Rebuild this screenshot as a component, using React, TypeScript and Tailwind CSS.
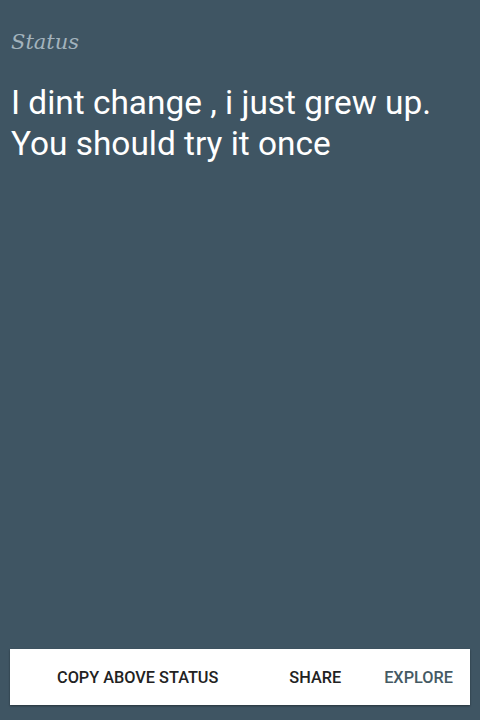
export default function App() {
  return (
    <div className="w-[480px] h-[720px] bg-[#3f5563] flex flex-col overflow-hidden">
      <div className="pl-[11px] pt-[28px] text-[21px] italic text-[#a3b3bd] leading-[28px]" style={{ fontFamily: '"DejaVu Serif", serif' }}>
        Status
      </div>
      <div className="pl-[11px] pt-[26px] text-[33.4px] leading-[41px] text-white" style={{ fontFamily: 'Roboto, sans-serif' }}>
        I dint change , i just grew up.
        <br />
        You should try it once
      </div>
      <div className="flex-1" />
      <div className="mx-[10px] mb-[15px] h-[56px] bg-white flex items-center pt-[3px] shadow-[0_1px_2px_rgba(0,0,0,0.4)] text-[16.3px] font-medium" style={{ fontFamily: 'Roboto, sans-serif' }}>
        <div className="ml-[47px] text-[#222222]">COPY ABOVE STATUS</div>
        <div className="ml-[71px] text-[#222222]">SHARE</div>
        <div className="ml-[43px] text-[#455a64]">EXPLORE</div>
      </div>
    </div>
  );
}
